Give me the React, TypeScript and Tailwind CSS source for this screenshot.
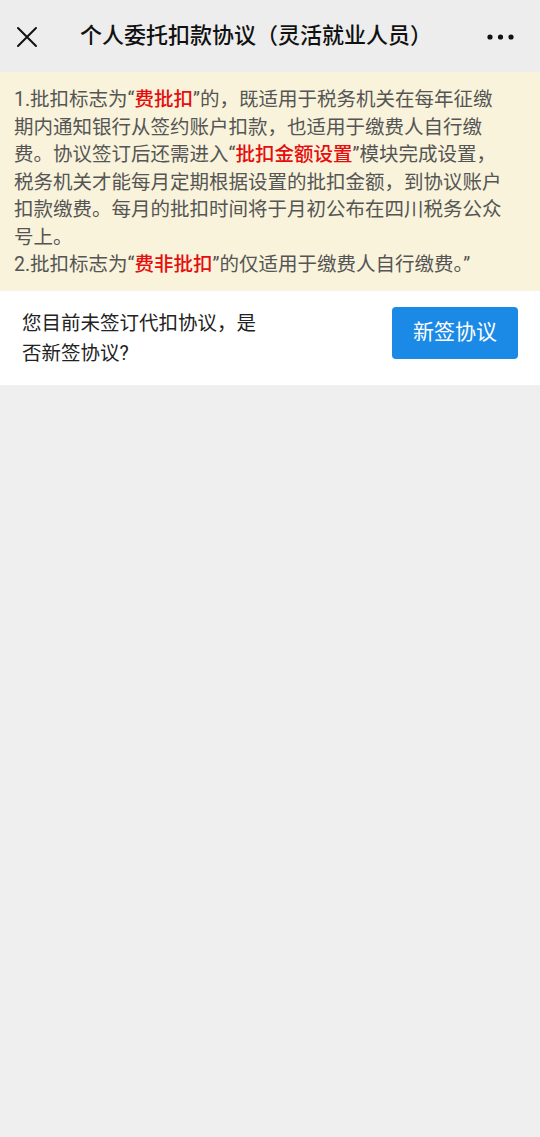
import React from 'react';

const font = { fontFamily: 'Roboto, "Noto Sans CJK SC", sans-serif' };

const Red: React.FC<{ children: React.ReactNode }> = ({ children }) => (
  <span className="text-[#e50d0d] font-medium">{children}</span>
);

const CloseIcon = () => (
  <svg width="22" height="22" viewBox="0 0 22 22" fill="none" stroke="#111" strokeWidth="2" strokeLinecap="round">
    <path d="M2 2 L20 20 M20 2 L2 20" />
  </svg>
);

const MoreIcon = () => (
  <svg width="28" height="8" viewBox="0 0 28 8" fill="#111">
    <circle cx="3" cy="4" r="2.6" />
    <circle cx="13.5" cy="4" r="2.6" />
    <circle cx="24" cy="4" r="2.6" />
  </svg>
);

const notice: React.ReactNode[] = [
  <>1.批扣标志为“<Red>费批扣</Red>”的，既适用于税务机关在每年征缴</>,
  <>期内通知银行从签约账户扣款，也适用于缴费人自行缴</>,
  <>费。协议签订后还需进入“<Red>批扣金额设置</Red>”模块完成设置，</>,
  <>税务机关才能每月定期根据设置的批扣金额，到协议账户</>,
  <>扣款缴费。每月的批扣时间将于月初公布在四川税务公众</>,
  <>号上。</>,
  <>2.批扣标志为“<Red>费非批扣</Red>”的仅适用于缴费人自行缴费。”</>,
];

export default function App() {
  return (
    <div className="min-h-[1137px] w-[540px] bg-[#efefef]" style={font}>
      {/* top bar */}
      <div className="h-[72px] bg-[#ededed] flex items-center">
        <div className="w-[80px] flex items-center pl-[16px] pt-[2px]">
          <CloseIcon />
        </div>
        <div className="flex-1 text-[22px] leading-[30px] font-medium text-[#111]">
          个人委托扣款协议（灵活就业人员）
        </div>
        <div className="pr-[25px] pt-[2px]">
          <MoreIcon />
        </div>
      </div>

      {/* notice */}
      <div className="bg-[#f8f3da] pl-[14px] pr-[20px] pt-[14px] pb-[12px] text-[19.5px] leading-[27.5px] text-[#555]">
        {notice.map((line, i) => (
          <div key={i} className="whitespace-nowrap">{line}</div>
        ))}
      </div>

      {/* sign prompt */}
      <div className="bg-white flex justify-between items-start px-[22px] pt-[16px] pb-[16px]">
        <p className="w-[240px] mt-[2px] text-[19.5px] leading-[30px] text-[#222]">
          您目前未签订代扣协议，是否新签协议?
        </p>
        <button className="w-[126px] h-[52px] rounded-[4px] bg-[#1b8ae6] text-white text-[21px]">
          新签协议
        </button>
      </div>
    </div>
  );
}
